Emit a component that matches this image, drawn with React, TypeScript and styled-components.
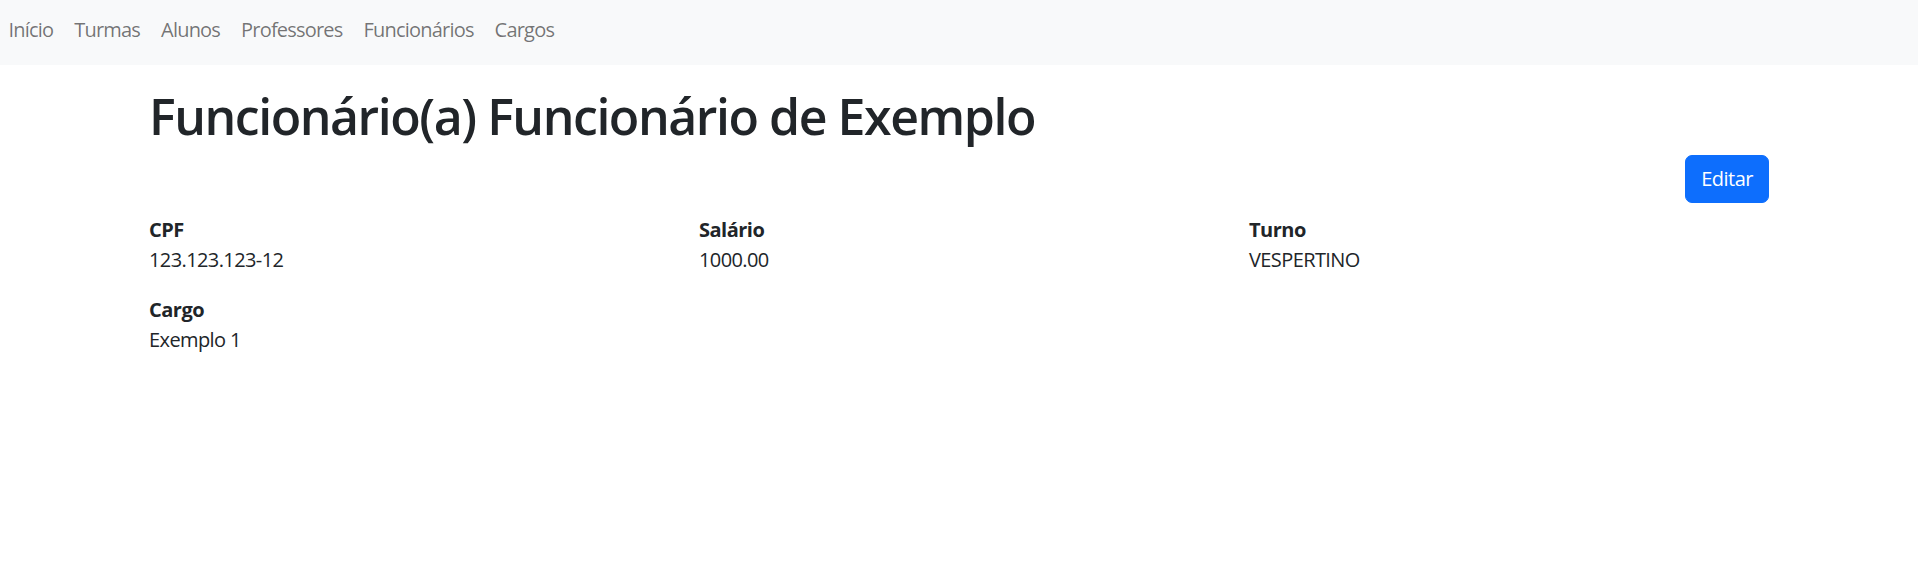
import React from "react";
import styled, { createGlobalStyle } from "styled-components";

const Global = createGlobalStyle`
  html, body { margin: 0; padding: 0; background: #fff; }
  body {
    font-family: "Open Sans", "Noto Sans", sans-serif;
    font-size: 20px;
    line-height: 30px;
    letter-spacing: -0.6px;
    color: #212529;
  }
  * { box-sizing: border-box; }
`;

const Navbar = styled.nav`
  height: 65px;
  background: #f8f9fa;
  display: flex;
  align-items: center;
  padding-bottom: 6px;
`;

const NavList = styled.ul`
  list-style: none;
  margin: 0;
  padding: 0;
  display: flex;
`;

const NavLink = styled.a`
  display: block;
  padding: 8px 10.5px;
  color: rgba(0, 0, 0, 0.55);
  text-decoration: none;
  font-size: 20px;
  line-height: 30px;
  letter-spacing: -0.8px;
`;

const FirstItem = styled.li`
  margin-left: -2px;
`;

const Container = styled.main`
  max-width: 1650px;
  margin: 0 auto;
  padding: 0 15px;
`;

const Title = styled.h1`
  margin: 20.5px 0 9.5px;
  font-size: 50px;
  line-height: 60px;
  font-weight: 600;
  letter-spacing: -1.45px;
`;

const Actions = styled.div`
  display: flex;
  justify-content: flex-end;
`;

const Button = styled.button`
  font-family: inherit;
  font-size: 20px;
  line-height: 30px;
  letter-spacing: -0.5px;
  height: 48px;
  padding: 8px 15px;
  border: 1px solid #0d6efd;
  border-radius: 7px;
  background: #0d6efd;
  color: #fff;
`;

const Grid = styled.div`
  display: grid;
  grid-template-columns: repeat(3, 1fr);
  margin: 12px -15px 0;
`;

const Field = styled.div`
  padding: 0 15px;
  margin-bottom: 20px;
`;

const Label = styled.div`
  font-weight: 700;
  letter-spacing: -0.5px;
`;

const Value = styled.div``;

const fields = [
  { label: "CPF", value: "123.123.123-12" },
  { label: "Salário", value: "1000.00" },
  { label: "Turno", value: "VESPERTINO" },
  { label: "Cargo", value: "Exemplo 1" },
];

const links = ["Início", "Turmas", "Alunos", "Professores", "Funcionários", "Cargos"];

export default function App() {
  return (
    <>
      <Global />
      <Navbar>
        <NavList>
          {links.map((t, i) =>
            i === 0 ? (
              <FirstItem key={t}>
                <NavLink href="#">{t}</NavLink>
              </FirstItem>
            ) : (
              <li key={t}>
                <NavLink href="#">{t}</NavLink>
              </li>
            )
          )}
        </NavList>
      </Navbar>
      <Container>
        <Title>Funcionário(a) Funcionário de Exemplo</Title>
        <Actions>
          <Button>Editar</Button>
        </Actions>
        <Grid>
          {fields.map((f) => (
            <Field key={f.label}>
              <Label>{f.label}</Label>
              <Value>{f.value}</Value>
            </Field>
          ))}
        </Grid>
      </Container>
    </>
  );
}
